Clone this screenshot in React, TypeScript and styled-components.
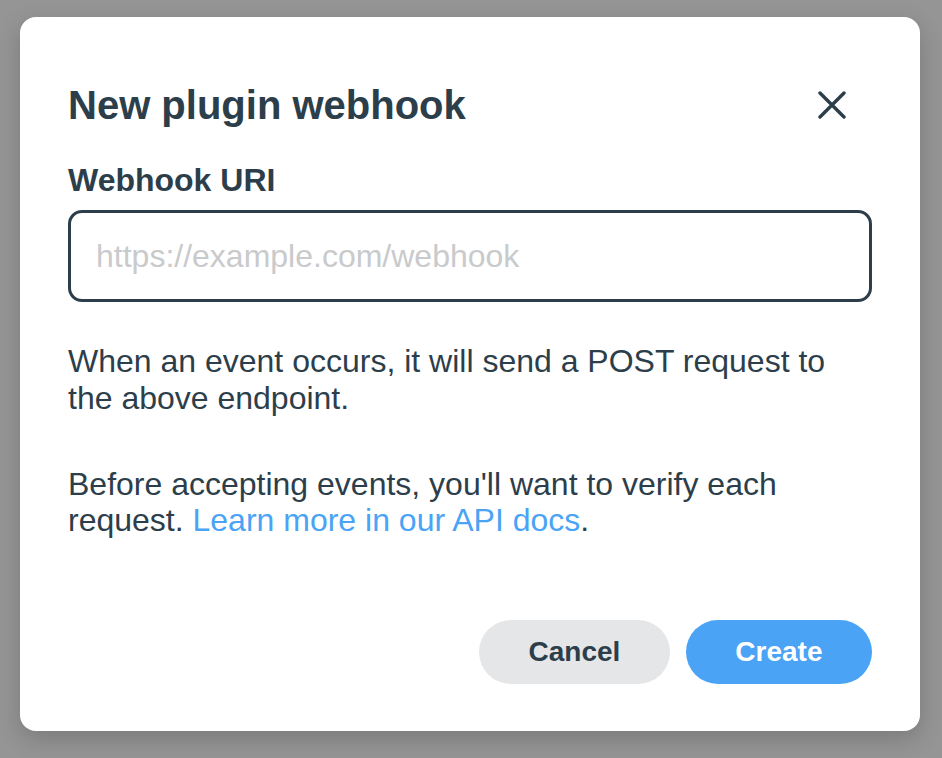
import React from "react";
import styled, { createGlobalStyle } from "styled-components";

const Global = createGlobalStyle`
  html, body {
    margin: 0;
    padding: 0;
    background: #959595;
    font-family: "Liberation Sans", Arial, Helvetica, sans-serif;
  }
  * { box-sizing: border-box; }
`;

const Backdrop = styled.div`
  width: 942px;
  height: 758px;
  padding: 17px 22px 0 20px;
  background: #959595;
`;

const Modal = styled.div`
  width: 900px;
  background: #ffffff;
  border-radius: 16px;
  box-shadow: 0 8px 24px rgba(0, 0, 0, 0.18);
  padding: 64px 48px 47px 48px;
  display: flex;
  flex-direction: column;
  color: #2d3e4b;
`;

const Header = styled.div`
  display: flex;
  align-items: center;
  justify-content: space-between;
`;

const Title = styled.h2`
  margin: 0;
  font-size: 40px;
  line-height: 48px;
  font-weight: 700;
  color: #2d3e4b;
`;

const CloseButton = styled.button`
  width: 40px;
  height: 40px;
  margin-right: 20px;
  border: none;
  background: transparent;
  padding: 0;
  display: flex;
  align-items: center;
  justify-content: center;
  cursor: pointer;
  color: #2d3e4b;
`;

const Label = styled.label`
  margin-top: 31px;
  font-size: 32px;
  line-height: 40px;
  font-weight: 700;
`;

const Input = styled.input`
  margin-top: 10px;
  width: 100%;
  height: 92px;
  border: 3px solid #2d3e4b;
  border-radius: 14px;
  padding: 0 25px;
  font-family: "Liberation Sans", Arial, Helvetica, sans-serif;
  font-size: 32px;
  color: #2d3e4b;
  outline: none;
  &::placeholder {
    color: #c9cacc;
  }
`;

const Paragraph = styled.p<{ $gap: number }>`
  margin: ${(p) => p.$gap}px 0 0 0;
  font-size: 32px;
  line-height: 36.8px;
  color: #2d3e4b;
`;

const Link = styled.a`
  color: #4aa3f5;
  text-decoration: none;
`;

const Footer = styled.div`
  margin-top: 81px;
  display: flex;
  justify-content: flex-end;
  gap: 16px;
`;

const Button = styled.button<{ $primary?: boolean }>`
  height: 64px;
  padding: 0 49.5px;
  border: none;
  border-radius: 32px;
  font-family: "Liberation Sans", Arial, Helvetica, sans-serif;
  font-size: 28px;
  font-weight: 700;
  cursor: pointer;
  background: ${(p) => (p.$primary ? "#4aa3f5" : "#e5e6e8")};
  color: ${(p) => (p.$primary ? "#ffffff" : "#2d3e4b")};
`;

export default function App() {
  return (
    <>
      <Global />
      <Backdrop>
        <Modal>
          <Header>
            <Title>New plugin webhook</Title>
            <CloseButton aria-label="Close">
              <svg width="28" height="28" viewBox="0 0 28 28" fill="none">
                <path
                  d="M2 2 L26 26 M26 2 L2 26"
                  stroke="currentColor"
                  strokeWidth="3.4"
                  strokeLinecap="round"
                />
              </svg>
            </CloseButton>
          </Header>
          <Label htmlFor="uri">Webhook URI</Label>
          <Input id="uri" placeholder="https://example.com/webhook" />
          <Paragraph $gap={41}>
            When an event occurs, it will send a POST request to the above endpoint.
          </Paragraph>
          <Paragraph $gap={49}>
            Before accepting events, you'll want to verify each request.{" "}
            <Link href="#">Learn more in our API docs</Link>.
          </Paragraph>
          <Footer>
            <Button>Cancel</Button>
            <Button $primary>Create</Button>
          </Footer>
        </Modal>
      </Backdrop>
    </>
  );
}
